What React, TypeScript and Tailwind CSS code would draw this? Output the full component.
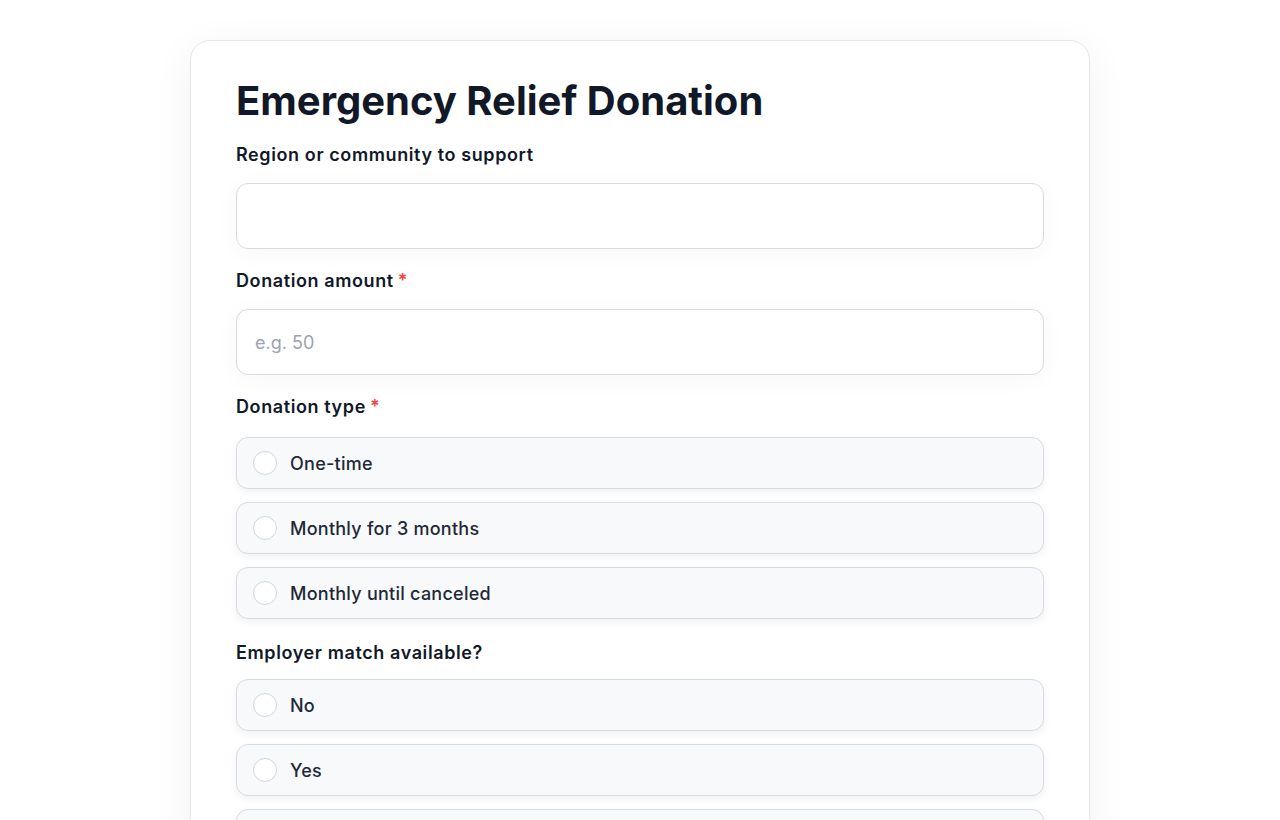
import React from "react";

const font = { fontFamily: 'Inter, "Noto Sans", sans-serif' };

function Label({ text, required, mb = "mb-4" }: { text: string; required?: boolean; mb?: string }) {
  return (
    <div className={"text-[18px] leading-6 font-semibold tracking-[0.6px] text-[#111827] " + mb}>
      {text}
      {required && <span className="text-[#ef4444] ml-1">*</span>}
    </div>
  );
}

function Option({ text }: { text: string }) {
  return (
    <label className="flex items-center h-[52px] px-4 gap-[13px] rounded-xl border border-[#d7dae0] bg-[#f8f9fb] shadow-[0_3px_8px_rgba(0,0,0,0.06)]">
      <span className="w-6 h-6 rounded-full border border-[#d1d5db] bg-white shrink-0" />
      <span className="text-[18px] font-medium tracking-[0.25px] text-[#1f2937]">{text}</span>
    </label>
  );
}

export default function App() {
  return (
    <div className="min-h-[820px] bg-white pt-10" style={font}>
      <div className="w-[900px] mx-auto rounded-[20px] border border-[#e5e7eb] bg-white shadow-[0_8px_40px_rgba(0,0,0,0.06)] px-[45px] pt-9 pb-10">
        <h1 className="text-[40px] leading-[48px] font-bold text-[#111827] mb-[18px]">
          Emergency Relief Donation
        </h1>
        <div className="flex flex-col gap-5">
          <div>
            <Label text="Region or community to support" />
            <input className="w-full h-[66px] rounded-xl border border-[#d7dae0] bg-white px-[18px] text-[18px] outline-none shadow-[0_4px_24px_rgba(0,0,0,0.035)]" />
          </div>
          <div>
            <Label text="Donation amount" required />
            <input
              placeholder="e.g. 50"
              className="w-full h-[66px] rounded-xl border border-[#d7dae0] bg-white px-[18px] text-[18px] outline-none placeholder:text-[#9ca3af] shadow-[0_4px_24px_rgba(0,0,0,0.035)]"
            />
          </div>
          <div>
            <Label text="Donation type" required mb="mb-[18px]" />
            <div className="flex flex-col gap-[13px]">
              <Option text="One-time" />
              <Option text="Monthly for 3 months" />
              <Option text="Monthly until canceled" />
            </div>
          </div>
          <div className="mt-[2px]">
            <Label text="Employer match available?" mb="mb-[14px]" />
            <div className="flex flex-col gap-[13px]">
              <Option text="No" />
              <Option text="Yes" />
              <Option text="Not sure" />
            </div>
          </div>
        </div>
      </div>
    </div>
  );
}
